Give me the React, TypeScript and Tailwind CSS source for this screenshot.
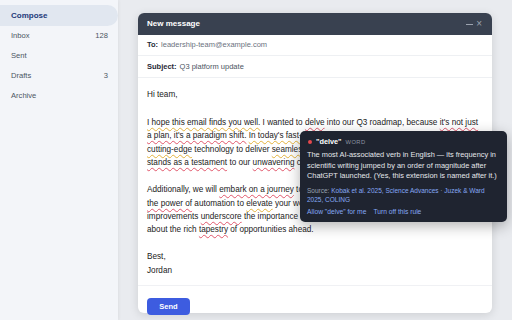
import React from "react";

const RED = "underline decoration-wavy decoration-[#e0566b] decoration-[0.5px] underline-offset-[1.5px]";
const YEL = "underline decoration-wavy decoration-[#e3b23c] decoration-[0.5px] underline-offset-[1.5px]";

const NAV = [
  { label: "Inbox", count: "128" },
  { label: "Sent", count: "" },
  { label: "Drafts", count: "3" },
  { label: "Archive", count: "" },
];

export default function App() {
  return (
    <div className="flex w-[512px] h-[320px] overflow-hidden font-['Liberation_Sans',Arial,sans-serif] bg-[#e9ebef]">
      {/* Sidebar */}
      <aside className="w-[118px] shrink-0 bg-[#f3f5f9] pt-[5px] shadow-[1px_0_3px_rgba(0,0,0,0.05)]">
        <div className="h-[21px] flex items-center pl-[11px] rounded-r-full bg-[#e1e7f0] text-[8px] font-bold text-[#1e3a7a]">
          Compose
        </div>
        {NAV.map((n) => (
          <div
            key={n.label}
            className="h-[20px] flex items-center justify-between pl-[11px] pr-[10px] text-[7.6px] text-[#4b5563]"
          >
            <span>{n.label}</span>
            {n.count && <span>{n.count}</span>}
          </div>
        ))}
      </aside>

      {/* Main */}
      <main className="flex-1 pl-[20px] pt-[13px]">
        <div className="relative w-[354px] h-[300px] bg-white rounded-[6px] shadow-[0_2px_10px_rgba(0,0,0,0.12)] flex flex-col">
          {/* Header */}
          <div className="h-[22px] shrink-0 bg-[#394150] rounded-t-[6px] pl-[9px] pr-[10px] flex items-center justify-between">
            <span className="text-[8px] font-bold text-white">New message</span>
            <span className="flex items-center gap-[3px] text-[#9ca3af] text-[10px] leading-none">
              <span className="block w-[7px] h-[1px] bg-[#9ca3af]" />
              <span>×</span>
            </span>
          </div>

          {/* To / Subject */}
          <div className="h-[21px] shrink-0 border-b border-[#eef0f3] px-[9px] flex items-center text-[7.5px]">
            <span className="font-bold text-[#1f2937] mr-[3px]">To:</span>
            <span className="text-[#6b7280]">leadership-team@example.com</span>
          </div>
          <div className="h-[22px] shrink-0 border-b border-[#eef0f3] px-[9px] flex items-center text-[7.5px]">
            <span className="font-bold text-[#1f2937] mr-[3px]">Subject:</span>
            <span className="text-[#4b5563]">Q3 platform update</span>
          </div>

          {/* Body */}
          <div className="flex-1 px-[9px] pt-[10px] text-[8.2px] leading-[13.4px] text-[#222] whitespace-nowrap">
            <p className="mb-[14.6px]">Hi team,</p>
            <p className="mb-[13.6px]">
              <span className={YEL}>I hope this email finds you well.</span> I wanted to{" "}
              <span className={RED}>delve</span> into our Q3 roadmap, because{" "}
              <span className={RED}>it's not just</span>
              <br />
              <span className={RED}>a plan, it's a paradigm shift.</span>{" "}
              <span className={YEL}>In today's fast-paced landscape</span>, we're leveraging
              <br />
              <span className={YEL}>cutting-edge</span> technology to deliver{" "}
              <span className={YEL}>seamless</span> experiences. This approach
              <br />
              <span className={RED}>stands as a testament</span> to our{" "}
              <span className={RED}>unwavering</span> commitment to innovation.
            </p>
            <p className="mb-[13.6px]">
              Additionally, we will <span className={RED}>embark on a journey</span> to harness
              <br />
              <span className={RED}>the power of</span> automation to{" "}
              <span className={YEL}>elevate</span> your workflows. These
              <br />
              improvements <span className={RED}>underscore</span> the importance of staying ahead.
              <br />
              about the rich <span className={RED}>tapestry</span> of opportunities ahead.
            </p>
            <p>
              Best,
              <br />
              Jordan
            </p>
          </div>

          {/* Footer */}
          <div className="h-[28px] shrink-0 border-t border-[#f0f1f4] px-[9px] pt-[6px]">
            <button className="w-[43px] h-[17px] rounded-[4px] bg-[#3d5ce0] text-white text-[7.5px] font-bold">
              Send
            </button>
          </div>

          {/* Tooltip */}
          <div className="absolute left-[162px] top-[118px] w-[207px] h-[91px] rounded-[5px] bg-[#1f2430] shadow-[0_4px_14px_rgba(0,0,0,0.3)] px-[7px] pt-[6px] whitespace-nowrap">
            <div className="h-[10px] flex items-center text-[7.3px]">
              <span className="w-[4px] h-[4px] rounded-full bg-[#e5484d] ml-[1px] mr-[4px]" />
              <span className="font-bold text-white">"delve"</span>
              <span className="ml-[4px] text-[5.8px] tracking-[0.4px] text-[#8b93a1]">WORD</span>
            </div>
            <div className="mt-[3px] text-[7.4px] leading-[10.5px] text-[#e5e7eb]">
              The most AI-associated verb in English — its frequency in
              <br />
              scientific writing jumped by an order of magnitude after
              <br />
              ChatGPT launched. (Yes, this extension is named after it.)
            </div>
            <div className="mt-[4px] text-[6.5px] leading-[9.5px] text-[#9aa3b2]">
              Source: <span className="text-[#86a8f5]">Kobak et al. 2025, Science Advances</span> ·{" "}
              <span className="text-[#86a8f5]">Juzek &amp; Ward</span>
              <br />
              <span className="text-[#86a8f5]">2025, COLING</span>
            </div>
            <div className="mt-[3px] h-[10px] flex items-center gap-[7px] text-[6.7px] text-[#86a8f5]">
              <span>Allow "delve" for me</span>
              <span>Turn off this rule</span>
            </div>
          </div>
        </div>
      </main>
    </div>
  );
}
